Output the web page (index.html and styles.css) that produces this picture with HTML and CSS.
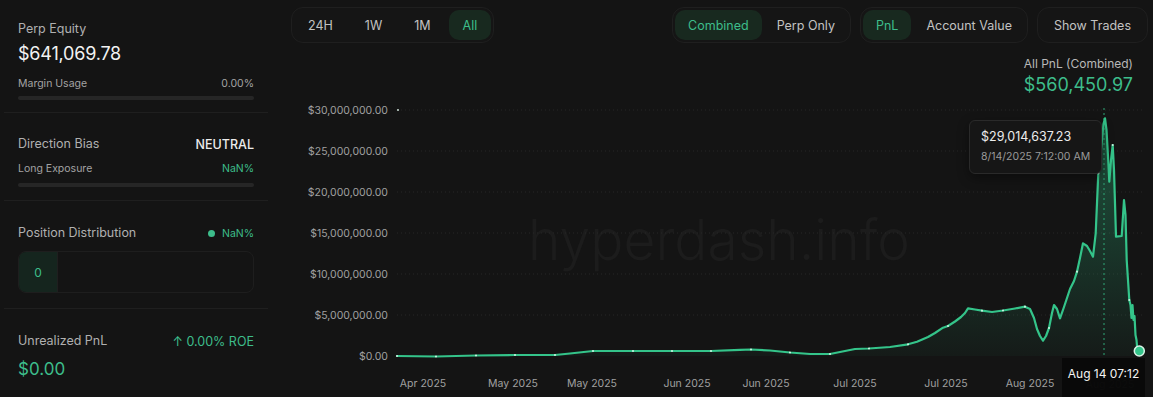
FILE: index.html
```html
<!DOCTYPE html>
<html lang="en">
<head>
    <meta charset="UTF-8">
    <meta name="viewport" content="width=device-width, initial-scale=1.0">
    <title>Wallet PnL</title>
    <link rel="stylesheet" href="styles.css">
</head>
<body>
    <div class="app">
        <aside class="sidebar">
            <section class="stat stat-equity">
                <div class="stat-label">Perp Equity</div>
                <div class="stat-value">$641,069.78</div>
                <div class="sub-row">
                    <span>Margin Usage</span>
                    <span>0.00%</span>
                </div>
                <div class="bar"></div>
            </section>

            <section class="stat stat-bias">
                <div class="row">
                    <span class="stat-label">Direction Bias</span>
                    <span class="bias">NEUTRAL</span>
                </div>
                <div class="sub-row">
                    <span>Long Exposure</span>
                    <span class="green">NaN%</span>
                </div>
                <div class="bar"></div>
            </section>

            <section class="stat stat-dist">
                <div class="row">
                    <span class="stat-label">Position Distribution</span>
                    <span class="legend green"><i class="dot"></i>NaN%</span>
                </div>
                <div class="dist-box">
                    <div class="dist-seg">0</div>
                </div>
            </section>

            <section class="stat stat-upnl">
                <div class="row">
                    <span class="stat-label">Unrealized PnL</span>
                    <span class="roe green">↑ 0.00% ROE</span>
                </div>
                <div class="upnl-value green">$0.00</div>
            </section>
        </aside>

        <main class="main">
            <div class="toolbar">
                <div class="seg">
                    <button class="seg-btn">24H</button>
                    <button class="seg-btn">1W</button>
                    <button class="seg-btn">1M</button>
                    <button class="seg-btn active">All</button>
                </div>
                <div class="toolbar-right">
                    <div class="seg seg-tight">
                        <button class="seg-btn active">Combined</button>
                        <button class="seg-btn">Perp Only</button>
                    </div>
                    <div class="seg seg-tight">
                        <button class="seg-btn active">PnL</button>
                        <button class="seg-btn">Account Value</button>
                    </div>
                    <div class="seg">
                        <button class="seg-btn trades">Show Trades</button>
                    </div>
                </div>
            </div>

            <div class="summary">
                <div class="summary-label">All PnL (Combined)</div>
                <div class="summary-value">$560,450.97</div>
            </div>

            <div class="chart">
                <svg class="chart-svg" width="862" height="297" viewBox="291 100 862 297">
                    <defs>
                        <linearGradient id="fill" x1="0" y1="118" x2="0" y2="356" gradientUnits="userSpaceOnUse">
                            <stop offset="0" stop-color="#2fbf84" stop-opacity="0.38"/>
                            <stop offset="1" stop-color="#2fbf84" stop-opacity="0.04"/>
                        </linearGradient>
                    </defs>

                    <text class="watermark" x="528" y="260" textLength="382" lengthAdjust="spacingAndGlyphs">hyperdash.info</text>

                    <g class="grid">
                        <line x1="397" y1="110" x2="1142" y2="110"/>
                        <line x1="397" y1="151" x2="1142" y2="151"/>
                        <line x1="397" y1="192" x2="1142" y2="192"/>
                        <line x1="397" y1="233" x2="1142" y2="233"/>
                        <line x1="397" y1="274" x2="1142" y2="274"/>
                        <line x1="397" y1="315" x2="1142" y2="315"/>
                    </g>

                    <g class="y-labels">
                        <text x="388" y="114">$30,000,000.00</text>
                        <text x="388" y="155">$25,000,000.00</text>
                        <text x="388" y="196">$20,000,000.00</text>
                        <text x="388" y="237">$15,000,000.00</text>
                        <text x="388" y="278">$10,000,000.00</text>
                        <text x="388" y="319">$5,000,000.00</text>
                        <text x="388" y="360">$0.00</text>
                    </g>

                    <g class="x-labels">
                        <text x="423" y="387">Apr 2025</text>
                        <text x="513" y="387">May 2025</text>
                        <text x="592" y="387">May 2025</text>
                        <text x="687" y="387">Jun 2025</text>
                        <text x="766" y="387">Jun 2025</text>
                        <text x="855" y="387">Jul 2025</text>
                        <text x="946" y="387">Jul 2025</text>
                        <text x="1030" y="387">Aug 2025</text>
                        <text class="hidden-label" x="1110" y="388">Aug 2025</text>
                    </g>

                    <polygon class="area" points="397,356 436,356.5 476,355.5 515,355 555,355 570,353.5 593,351 633,351 672,351 711,351 740,349.8 751,349.5 770,350.5 790,352.5 810,354 830,354 845,351 855,349 869,348.5 890,347 908,344.3 917,341.7 928,337 935,333 943,327.7 948,326 955,321.5 961,317 965,313 968,308.3 975,309.5 982,310.7 992,312 1003,310.5 1015,308.5 1025,306.7 1030,309 1034,318 1037,329 1040,336 1043,340.7 1046,336 1049,328 1052,313 1054,305 1057,309 1060,318.3 1064,307 1070,289 1074,281 1077,271.7 1080,258 1083,243.3 1087,246 1090,251 1093,256.7 1095.7,233.3 1098.3,173.3 1101,150 1103.5,124 1105,118.3 1106.5,130 1108.3,161.7 1109.3,181.7 1111,160 1112.7,145 1114,170 1115,203.3 1116,236.7 1121.7,236 1124,200 1125.5,215 1126.7,260 1129.3,300 1130.5,305 1131.5,318 1132.5,305 1133.5,320 1134.5,316 1135.5,335 1136.5,340 1137.5,352 1139.3,351 1139.3,356"/>

                    <line class="crosshair" x1="1104" y1="108" x2="1104" y2="358"/>

                    <polyline class="line" points="397,356 436,356.5 476,355.5 515,355 555,355 570,353.5 593,351 633,351 672,351 711,351 740,349.8 751,349.5 770,350.5 790,352.5 810,354 830,354 845,351 855,349 869,348.5 890,347 908,344.3 917,341.7 928,337 935,333 943,327.7 948,326 955,321.5 961,317 965,313 968,308.3 975,309.5 982,310.7 992,312 1003,310.5 1015,308.5 1025,306.7 1030,309 1034,318 1037,329 1040,336 1043,340.7 1046,336 1049,328 1052,313 1054,305 1057,309 1060,318.3 1064,307 1070,289 1074,281 1077,271.7 1080,258 1083,243.3 1087,246 1090,251 1093,256.7 1095.7,233.3 1098.3,173.3 1101,150 1103.5,124 1105,118.3 1106.5,130 1108.3,161.7 1109.3,181.7 1111,160 1112.7,145 1114,170 1115,203.3 1116,236.7 1121.7,236 1124,200 1125.5,215 1126.7,260 1129.3,300 1130.5,305 1131.5,318 1132.5,305 1133.5,320 1134.5,316 1135.5,335 1136.5,340 1137.5,352 1139.3,351"/>

                    <g class="points">
                        <circle cx="398" cy="110" r="1.1"/>
                        <circle cx="397" cy="356" r="1.1"/>
                        <circle cx="436" cy="356.5" r="1.1"/>
                        <circle cx="476" cy="355.5" r="1.1"/>
                        <circle cx="515" cy="355" r="1.1"/>
                        <circle cx="555" cy="355" r="1.1"/>
                        <circle cx="593" cy="351" r="1.1"/>
                        <circle cx="633" cy="351" r="1.1"/>
                        <circle cx="672" cy="351" r="1.1"/>
                        <circle cx="711" cy="351" r="1.1"/>
                        <circle cx="751" cy="349.5" r="1.1"/>
                        <circle cx="790" cy="352.5" r="1.1"/>
                        <circle cx="830" cy="354" r="1.1"/>
                        <circle cx="869" cy="348.5" r="1.1"/>
                        <circle cx="908" cy="344.3" r="1.1"/>
                        <circle cx="948" cy="326" r="1.1"/>
                        <circle cx="982" cy="310.7" r="1.1"/>
                        <circle cx="1003" cy="310.5" r="1.1"/>
                        <circle cx="1025" cy="306.7" r="1.1"/>
                        <circle cx="1049" cy="328" r="1.1"/>
                        <circle cx="1077" cy="271.7" r="1.1"/>
                        <circle cx="1098.3" cy="173.3" r="1.1"/>
                        <circle cx="1112.7" cy="145" r="1.1"/>
                        <circle cx="1129.3" cy="300" r="1.1"/>
                    </g>

                    <circle class="end-dot" cx="1139.3" cy="351" r="5"/>
                </svg>

                <div class="tooltip">
                    <div class="tooltip-value">$29,014,637.23</div>
                    <div class="tooltip-date">8/14/2025 7:12:00 AM</div>
                </div>

                <div class="cross-label">Aug 14 07:12</div>
            </div>
        </main>
    </div>
</body>
</html>
```

FILE: styles.css
```css
body {
    margin: 0;
    padding: 0;
    background-color: #141414;
    font-family: 'Inter', 'Noto Sans', sans-serif;
    color: #e6e6e6;
    overflow: hidden;
}

.app {
    display: flex;
    height: 397px;
    width: 1153px;
}

.green {
    color: #3dbd8b;
}

/* sidebar */

.sidebar {
    width: 272px;
    flex-shrink: 0;
    padding: 0 4px;
    box-sizing: border-box;
}

.stat {
    padding: 0 14px;
    border-bottom: 1px solid #1f1f1f;
    box-sizing: border-box;
}

.stat-equity {
    height: 113px;
    padding-top: 21px;
}

.stat-bias {
    height: 88px;
    padding-top: 23px;
}

.stat-dist {
    height: 108px;
    padding-top: 24px;
}

.stat-upnl {
    border-bottom: none;
    padding-top: 24px;
}

.stat-label {
    font-size: 12.5px;
    line-height: 16px;
    color: #b0b0b0;
}

.stat-value {
    margin-top: 5px;
    font-size: 18px;
    line-height: 24px;
    color: #f2f2f2;
    letter-spacing: -0.2px;
}

.row {
    display: flex;
    justify-content: space-between;
    align-items: center;
    height: 16px;
}

.sub-row {
    display: flex;
    justify-content: space-between;
    align-items: center;
    font-size: 10.5px;
    line-height: 14px;
    color: #a3a3a3;
}

.stat-equity .sub-row {
    margin-top: 11px;
}

.stat-bias .sub-row {
    margin-top: 10px;
}

.bar {
    height: 4px;
    margin-top: 5px;
    border-radius: 2px;
    background-color: #262626;
}

.stat-bias .bar {
    margin-top: 7px;
}

.bias {
    font-size: 12.5px;
    font-weight: 500;
    color: #ececec;
}

.legend {
    display: flex;
    align-items: center;
    gap: 7px;
    font-size: 10.5px;
}

.dot {
    width: 7px;
    height: 7px;
    border-radius: 50%;
    background-color: #3dbd8b;
}

.dist-box {
    display: flex;
    height: 42px;
    margin-top: 10px;
    border: 1px solid #1e1e1e;
    border-radius: 8px;
    overflow: hidden;
    box-sizing: border-box;
}

.dist-seg {
    width: 38px;
    display: flex;
    align-items: center;
    justify-content: center;
    font-size: 12px;
    color: #3dbd8b;
    background-color: #15251e;
    border-right: 1px solid #1f1f1f;
}

.roe {
    font-size: 12.5px;
}

.upnl-value {
    margin-top: 8px;
    font-size: 17px;
    line-height: 24px;
}

/* main */

.main {
    flex: 1;
    padding: 7px 0 0 19px;
    display: flex;
    flex-direction: column;
}

.toolbar {
    display: flex;
    justify-content: space-between;
    padding-right: 5px;
    height: 36px;
}

.toolbar-right {
    display: flex;
    gap: 9px;
}

.seg {
    display: flex;
    gap: 4px;
    padding: 2px;
    border: 1px solid #1f1f1f;
    border-radius: 12px;
    background-color: #151515;
}

.seg-tight {
    gap: 2px;
}

.seg-btn {
    padding: 0 14px;
    border: none;
    border-radius: 10px;
    background: none;
    font-family: 'Inter', 'Noto Sans', sans-serif;
    font-size: 12.5px;
    color: #c2c2c2;
    cursor: pointer;
}

.seg-tight .seg-btn {
    padding: 0 13px;
}

.seg-btn.active {
    color: #3dbd8b;
    background-color: #18291f;
}

.seg-btn.trades {
    padding: 0 14px;
}

.summary {
    margin-top: 12px;
    padding-right: 20px;
    text-align: right;
}

.summary-label {
    font-size: 12px;
    line-height: 18px;
    color: #b8b8b8;
}

.summary-value {
    font-size: 18px;
    line-height: 24px;
    color: #3dbd8b;
}

.chart {
    position: relative;
    margin-top: 3px;
    width: 862px;
    height: 297px;
}

.chart-svg {
    display: block;
}

.watermark {
    font-family: 'Inter', sans-serif;
    font-size: 56px;
    font-weight: 300;
    fill: #1c1c1c;
}

.grid line {
    stroke: #262626;
    stroke-width: 1;
    stroke-dasharray: 1 3;
}

.y-labels text {
    font-family: 'Inter', sans-serif;
    font-size: 10.5px;
    fill: #a0a0a0;
    text-anchor: end;
}

.x-labels text {
    font-family: 'Inter', sans-serif;
    font-size: 10.5px;
    fill: #a0a0a0;
    text-anchor: middle;
}

.x-labels .hidden-label {
    fill: #3a3a3a;
}

.area {
    fill: url(#fill);
}

.line {
    fill: none;
    stroke: #34c48a;
    stroke-width: 2.2;
    stroke-linejoin: round;
    stroke-linecap: round;
}

.crosshair {
    stroke: #2fa776;
    stroke-width: 1;
    stroke-dasharray: 2 3;
}

.points circle {
    fill: #e8fff4;
    opacity: 0.8;
}

.end-dot {
    fill: #34c48a;
    stroke: #d8f3e6;
    stroke-width: 1.5;
}

.tooltip {
    position: absolute;
    left: 678px;
    top: 20px;
    width: 133px;
    height: 54px;
    padding: 7px 0 0 11px;
    box-sizing: border-box;
    background-color: #161616;
    border: 1px solid #2a2a2a;
    border-radius: 6px;
    box-shadow: 0 4px 12px rgba(0, 0, 0, 0.4);
}

.tooltip-value {
    font-size: 12.5px;
    line-height: 18px;
    color: #ededed;
}

.tooltip-date {
    margin-top: 4px;
    font-size: 10.5px;
    line-height: 14px;
    color: #9a9a9a;
}

.cross-label {
    position: absolute;
    left: 771px;
    top: 258px;
    width: 83px;
    height: 40px;
    padding-top: 9px;
    box-sizing: border-box;
    text-align: center;
    font-size: 12px;
    line-height: 14px;
    color: #f4f4f4;
    background-color: rgba(8, 8, 8, 0.9);
}
```
